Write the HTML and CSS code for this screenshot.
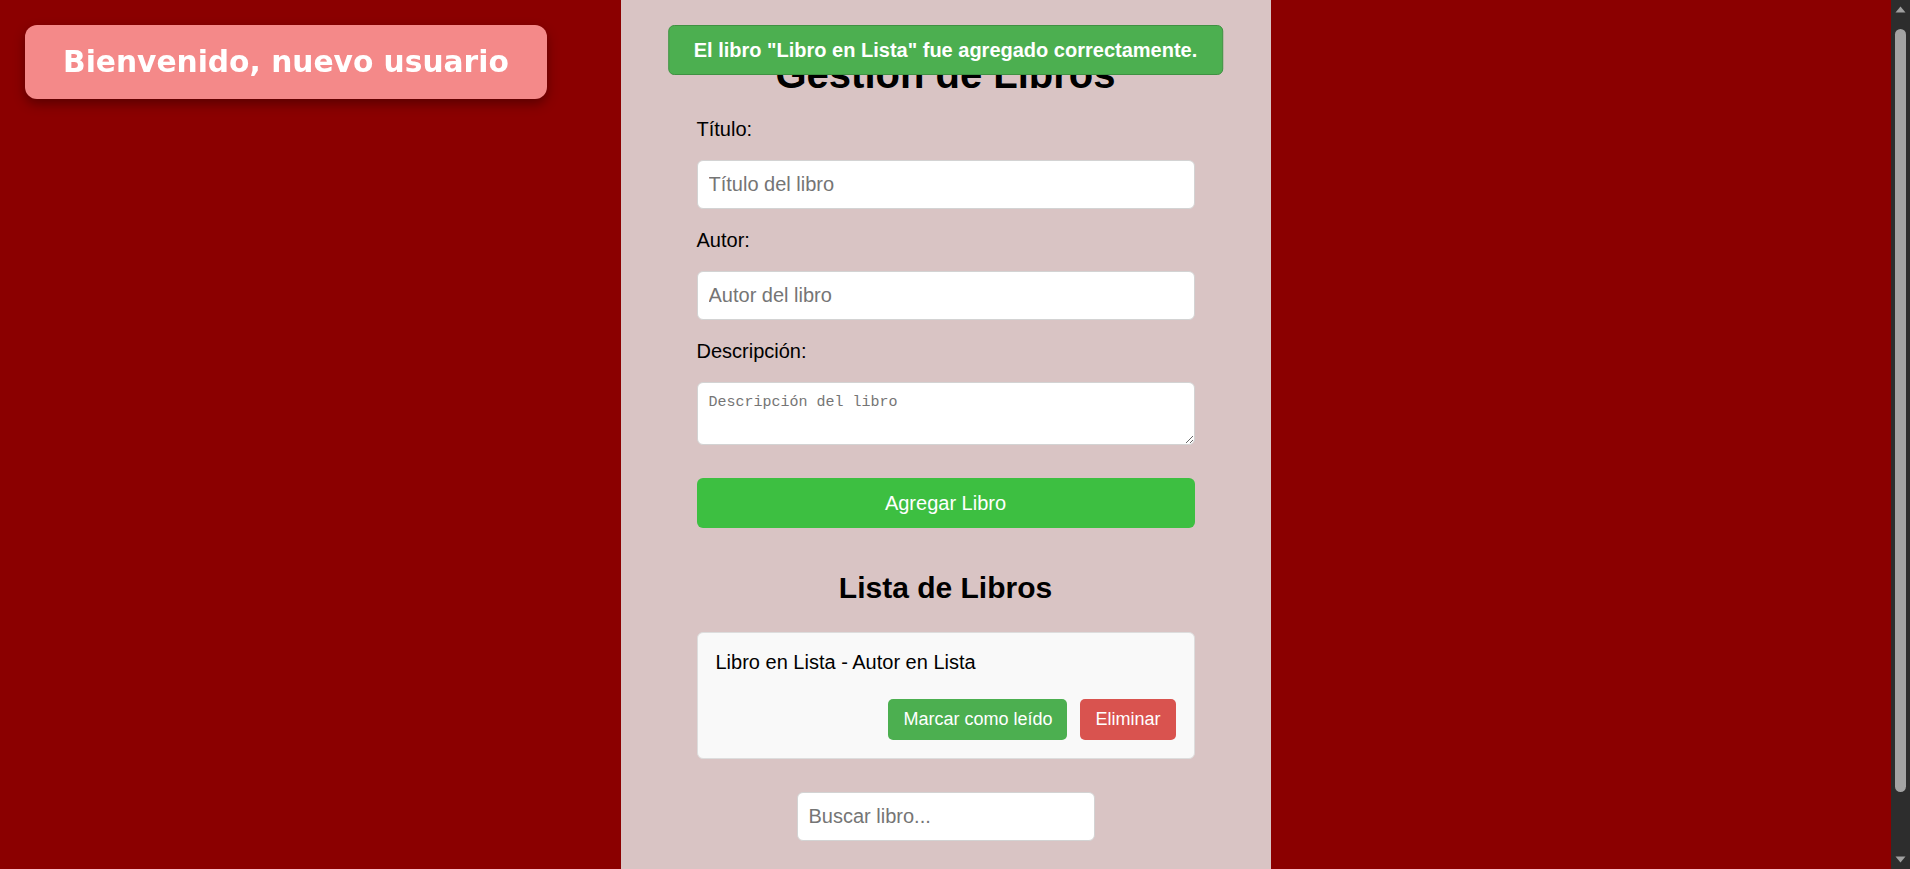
FILE: index.html
```html
<!DOCTYPE html>
<html lang="es">
<head>
<meta charset="utf-8">
<title>Gestión de Libros</title>
<link rel="stylesheet" href="styles.css">
</head>
<body>
  <div class="welcome">Bienvenido, nuevo usuario</div>
  <div class="toast">El libro "Libro en Lista" fue agregado correctamente.</div>

  <main class="panel">
    <h1 class="title">Gestión de Libros</h1>
    <form class="book-form">
      <label class="field-label" for="titulo">Título:</label>
      <input class="field-input" id="titulo" type="text" placeholder="Título del libro">
      <label class="field-label" for="autor">Autor:</label>
      <input class="field-input" id="autor" type="text" placeholder="Autor del libro">
      <label class="field-label" for="descripcion">Descripción:</label>
      <textarea class="field-textarea" id="descripcion" placeholder="Descripción del libro"></textarea>
      <button class="add-btn" type="button">Agregar Libro</button>
    </form>

    <h2 class="list-title">Lista de Libros</h2>
    <ul class="book-list">
      <li class="book-item">
        <span class="book-text">Libro en Lista - Autor en Lista</span>
        <div class="book-actions">
          <button class="btn btn-read" type="button">Marcar como leído</button>
          <button class="btn btn-delete" type="button">Eliminar</button>
        </div>
      </li>
    </ul>

    <div class="search-row">
      <input class="search-input" type="text" placeholder="Buscar libro...">
    </div>
  </main>

  <div class="fake-scrollbar" aria-hidden="true">
    <div class="sb-arrow">
      <svg width="11" height="7" viewBox="0 0 11 7"><path d="M5.5 0.5 L10.5 6.5 L0.5 6.5 Z" fill="#a0a0a0"/></svg>
    </div>
    <div class="sb-track"><div class="sb-thumb"></div></div>
    <div class="sb-arrow">
      <svg width="11" height="7" viewBox="0 0 11 7"><path d="M0.5 0.5 L10.5 0.5 L5.5 6.5 Z" fill="#a0a0a0"/></svg>
    </div>
  </div>
</body>
</html>
```

FILE: styles.css
```css
html {
  background: #8b0000;
  scrollbar-width: none;
}

::-webkit-scrollbar {
  display: none;
}

body {
  margin: 0;
  padding-right: 19px;
  background: #8b0000;
  font-family: "Liberation Sans", Arial, sans-serif;
  color: #000;
}

/* overlay scrollbar drawn on the right edge */
.fake-scrollbar {
  position: fixed;
  top: 0;
  right: 0;
  bottom: 0;
  width: 19px;
  background: #2d2d2d;
  display: flex;
  flex-direction: column;
  z-index: 20;
}

.sb-arrow {
  height: 19px;
  display: flex;
  align-items: center;
  justify-content: center;
  flex: none;
}

.sb-track {
  flex: 1;
  padding: 10px 4px 0;
}

.sb-thumb {
  height: 763px;
  background: #a3a3a3;
  border-radius: 6px;
}

.welcome {
  position: fixed;
  top: 25px;
  left: 25px;
  z-index: 5;
  background: #f48989;
  color: #fff;
  font-family: "DejaVu Sans", Verdana, sans-serif;
  font-weight: 700;
  font-size: 29.7px;
  line-height: 40px;
  padding: 17px 38px;
  border-radius: 12px;
  box-shadow: 0 5px 12px rgba(0, 0, 0, 0.35);
  white-space: nowrap;
}

.toast {
  position: fixed;
  top: 25px;
  left: calc(50% - 9.5px);
  transform: translateX(-50%);
  z-index: 10;
  background: #4caf50;
  border: 1px solid #3f9142;
  border-radius: 6px;
  color: #fff;
  font-weight: 700;
  font-size: 20px;
  line-height: 23px;
  padding: 12.5px 25px;
  white-space: nowrap;
}

.panel {
  display: flow-root;
  width: 650px;
  box-sizing: border-box;
  margin: 0 auto;
  padding: 0 76px 100px;
  background: #d9c4c4;
  min-height: 940px;
}

.title {
  margin: 51px 0 21px;
  font-size: 40px;
  line-height: 46px;
  font-weight: 700;
  text-align: center;
}

.book-form {
  display: flex;
  flex-direction: column;
}

.field-label {
  display: block;
  font-size: 20px;
  line-height: 23px;
  margin-bottom: 19px;
}

.field-input,
.search-input {
  display: block;
  box-sizing: border-box;
  height: 49px;
  border: 1px solid #d3d3d3;
  border-radius: 6px;
  background: #fff;
  font-family: "Liberation Sans", Arial, sans-serif;
  font-size: 20px;
  padding: 0 11px;
  color: #000;
  outline: none;
}

.field-input {
  width: 100%;
  margin: 0 0 20px;
}

.field-input::placeholder,
.search-input::placeholder {
  color: #757575;
}

.field-textarea {
  display: block;
  box-sizing: border-box;
  width: 100%;
  height: 63px;
  margin: 0 0 33px;
  border: 1px solid #d3d3d3;
  border-radius: 6px;
  background: #fff;
  padding: 11px 11px;
  font-family: "Liberation Mono", "DejaVu Sans Mono", monospace;
  font-size: 15px;
  line-height: 18px;
  outline: none;
}

.field-textarea::placeholder {
  color: #757575;
}

.add-btn {
  display: block;
  width: 100%;
  height: 50px;
  border: none;
  border-radius: 6px;
  background: #3dbf41;
  color: #fff;
  font-family: "Liberation Sans", Arial, sans-serif;
  font-size: 20px;
  cursor: pointer;
}

.list-title {
  margin: 43px 0 27px;
  font-size: 30px;
  line-height: 34px;
  font-weight: 700;
  text-align: center;
}

.book-list {
  list-style: none;
  margin: 0;
  padding: 0;
}

.book-item {
  display: flex;
  flex-direction: column;
  background: #f9f9f9;
  border: 1px solid #ddd;
  border-radius: 6px;
  padding: 18px;
}

.book-text {
  font-size: 20px;
  line-height: 23px;
}

.book-actions {
  display: flex;
  justify-content: flex-end;
  gap: 13px;
  margin-top: 25px;
}

.btn {
  height: 41px;
  border: none;
  border-radius: 5px;
  padding: 0 15px;
  color: #fff;
  font-family: "Liberation Sans", Arial, sans-serif;
  font-size: 18px;
  cursor: pointer;
}

.btn-read {
  background: #4caf50;
}

.btn-delete {
  background: #d9534f;
}

.search-row {
  display: flex;
  justify-content: center;
  margin-top: 33px;
}

.search-input {
  width: 298px;
}
```
